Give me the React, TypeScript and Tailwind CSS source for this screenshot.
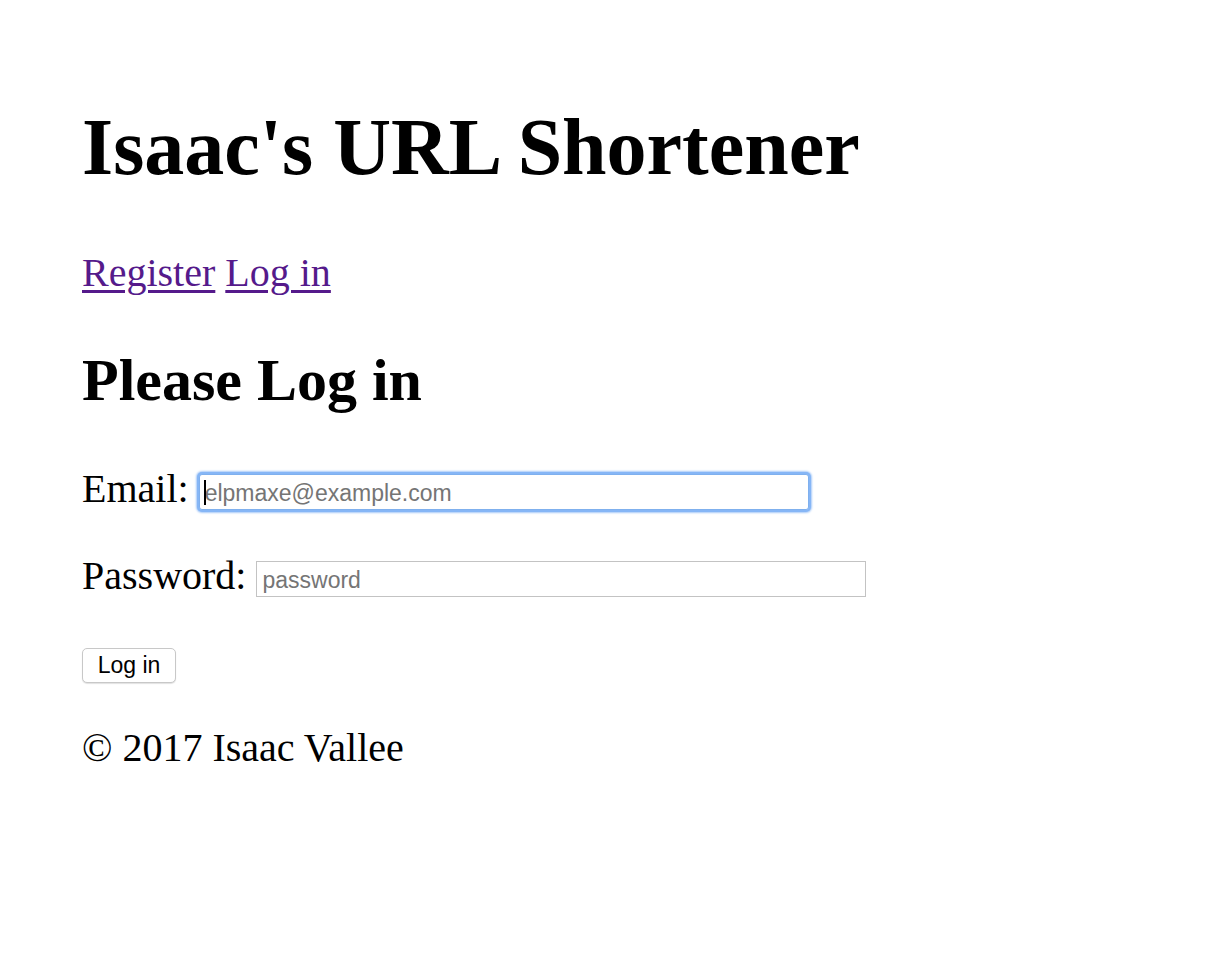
import React from "react";

export default function App() {
  return (
    <div className="min-h-screen bg-white text-black font-['Liberation_Serif',serif] pt-[103px] pl-[82px]">
      <h1 className="text-[80px] font-bold leading-[88px] m-0">Isaac's URL Shortener</h1>
      <nav className="mt-[60px] text-[40px] leading-[44px]">
        <a href="#" className="text-[#551a8b] underline decoration-[3px] underline-offset-[4px]">
          Register
        </a>{" "}
        <a href="#" className="text-[#551a8b] underline decoration-[3px] underline-offset-[4px]">
          Log in
        </a>
      </nav>
      <h2 className="mt-[52px] text-[60px] font-bold leading-[66px]">Please Log in</h2>
      <form onSubmit={(e) => e.preventDefault()}>
        <div className="mt-[54px] flex items-start gap-[10px] text-[40px] leading-[44px]">
          <label htmlFor="email">Email:</label>
          <div className="relative mt-[7px] h-[36px] w-[610px]">
            <input
              id="email"
              type="email"
              placeholder="elpmaxe@example.com"
              className="block h-full w-full rounded-[3px] border border-[#7fb0ee] bg-white pl-[5px] pt-[3px] text-[23px] leading-none text-black outline-none shadow-[0_0_0_2px_#86b6f6,0_0_2px_3px_#a9cbf8] placeholder:text-[#757575] font-['Liberation_Sans',sans-serif]"
            />
            <span className="pointer-events-none absolute left-[5px] top-[6px] h-[25px] w-[2px] bg-black" />
          </div>
        </div>
        <div className="mt-[43px] flex items-start gap-[10px] text-[40px] leading-[44px]">
          <label htmlFor="password">Password:</label>
          <input
            id="password"
            type="password"
            placeholder="password"
            className="mt-[7px] block h-[36px] w-[610px] border border-[#c3c3c3] bg-white pl-[5px] pt-[2px] text-[23px] leading-none text-black outline-none placeholder:text-[#757575] font-['Liberation_Sans',sans-serif]"
          />
        </div>
        <button
          type="submit"
          className="mt-[50px] block h-[35px] w-[94px] rounded-[5px] border border-[#c8c8c8] bg-white text-[23px] leading-none text-black shadow-[0_1px_1px_rgba(0,0,0,0.12)] font-['Liberation_Sans',sans-serif]"
        >
          Log in
        </button>
      </form>
      <footer className="mt-[43px] text-[40px] leading-[44px]">© 2017 Isaac Vallee</footer>
    </div>
  );
}
